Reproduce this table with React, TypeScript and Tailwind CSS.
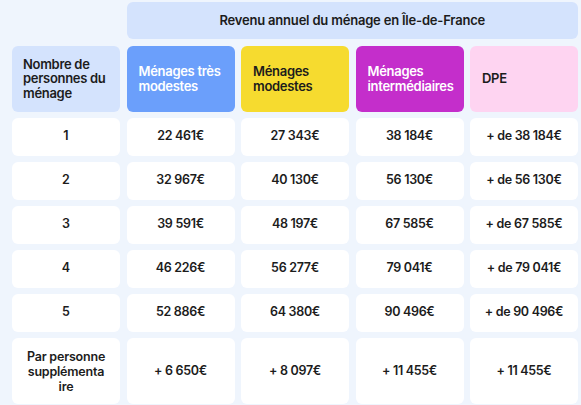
import React from 'react';

const rows = [
  { label: '1', values: ['22 461€', '27 343€', '38 184€', '+ de 38 184€'] },
  { label: '2', values: ['32 967€', '40 130€', '56 130€', '+ de 56 130€'] },
  { label: '3', values: ['39 591€', '48 197€', '67 585€', '+ de 67 585€'] },
  { label: '4', values: ['46 226€', '56 277€', '79 041€', '+ de 79 041€'] },
  { label: '5', values: ['52 886€', '64 380€', '90 496€', '+ de 90 496€'] },
];

const categories = [
  { label: 'Ménages très modestes', className: 'bg-[#6b9ffb] text-white' },
  { label: 'Ménages modestes', className: 'bg-[#f6db2f] text-[#1c1c1c]' },
  { label: 'Ménages intermédiaires', className: 'bg-[#c42ecb] text-white' },
  { label: 'DPE', className: 'bg-[#fed4f1] text-[#1c1c1c]' },
];

const App: React.FC = () => {
  return (
    <div className="h-[405px] w-[581px] overflow-hidden bg-[#eff5fd] pl-[12px] pt-[1.5px] font-['Inter',sans-serif] text-[#1c1c1c]">
      <div className="grid grid-cols-[108px_108px_108px_108px_108px] grid-rows-[37.5px_66px_37.5px_37.5px_37.5px_37.5px_37.5px_66px] gap-[6.5px]">
        {/* income header */}
        <div className="col-start-2 col-span-4 flex items-center justify-center rounded-[6px] bg-[#d4e3fd] text-[13px] font-semibold tracking-[-0.2px]">
          Revenu annuel du ménage en Île-de-France
        </div>

        {/* category headers */}
        <div className="col-start-1 flex items-center rounded-[6px] bg-[#d4e3fd] px-[11px] text-[13px] font-semibold leading-[14.5px] tracking-[-0.3px]">
          Nombre de personnes du ménage
        </div>
        {categories.map((cat) => (
          <div
            key={cat.label}
            className={`flex items-center rounded-[6px] px-[12px] text-[13px] font-semibold leading-[14.5px] tracking-[-0.3px] ${cat.className}`}
          >
            {cat.label}
          </div>
        ))}

        {rows.map((row) => (
          <React.Fragment key={row.label}>
            <div className="flex items-center justify-center rounded-[6px] bg-white text-[12.5px] font-semibold">
              {row.label}
            </div>
            {row.values.map((v, i) => (
              <div
                key={i}
                className="flex items-center justify-center rounded-[6px] bg-white text-[12.5px] font-semibold tracking-[-0.3px]"
              >
                {v}
              </div>
            ))}
          </React.Fragment>
        ))}

        <div className="flex items-center justify-center rounded-[6px] bg-white text-center text-[12.5px] font-semibold leading-[15px] tracking-[-0.2px]">
          Par personne
          <br />
          supplémenta
          <br />
          ire
        </div>
        {['+ 6 650€', '+ 8 097€', '+ 11 455€', '+ 11 455€'].map((v, i) => (
          <div
            key={i}
            className="flex items-center justify-center rounded-[6px] bg-white text-[12.5px] font-semibold tracking-[-0.3px]"
          >
            {v}
          </div>
        ))}
      </div>
    </div>
  );
};

export default App;
